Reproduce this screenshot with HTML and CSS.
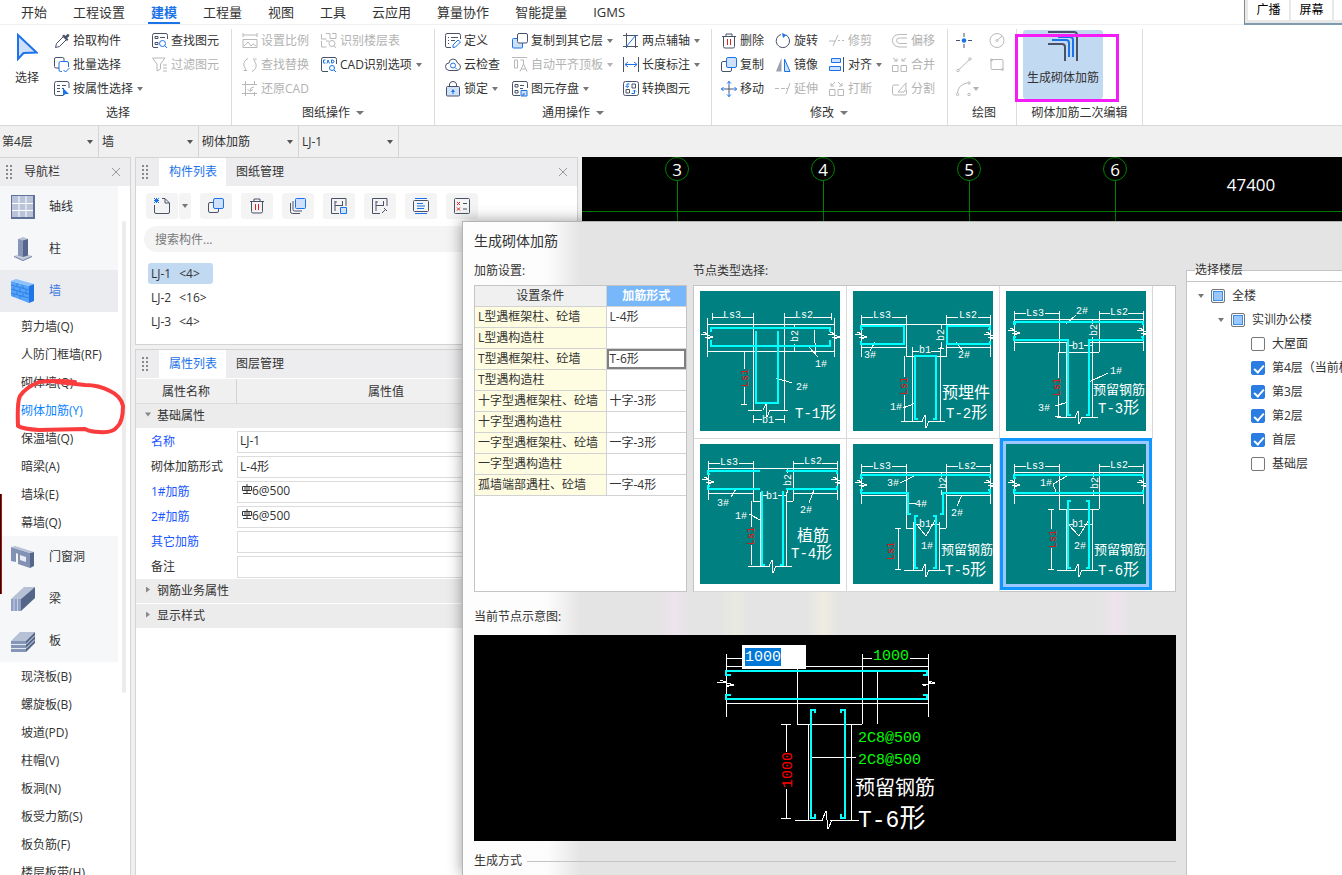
FILE: index.html
```html
<!DOCTYPE html>
<html lang="zh-CN">
<head>
<meta charset="utf-8">
<title>生成砌体加筋</title>
<link rel="stylesheet" href="styles.css">
</head>
<body>
<svg class="defs" aria-hidden="true">
  <symbol id="side-break" viewBox="-7 -6 14 12" overflow="visible"><path d="M-6-1H1L-4-3M0 2H6L0 0M-2 2L3 4"/></symbol>
  <symbol id="foot-break" viewBox="-7 -7 14 14" overflow="visible"><path d="M-3 0L0-6L1 7L4 0"/></symbol>
  <symbol id="i-close" viewBox="0 0 10 10"><path d="M1 1l8 8M9 1l-8 8"/></symbol>
  <symbol id="i-copy" viewBox="0 0 16 16"><rect class="d" x=".5" y="4.500" width="10" height="10" rx="1.500"/><rect class="bf" x="5.500" y=".5" width="10" height="10" rx="1.500"/></symbol>
  <symbol id="i-trash" viewBox="0 0 16 16"><path class="d" d="M1 3.500h14M5 3V1h6v2M2.500 4v9.500q0 1.500 1.500 1.500h8q1.500 0 1.500-1.500V4"/><path class="r" d="M6.500 6v6M9.500 6v6"/></symbol>
</svg>

<nav class="menu">
  <a href="#">开始</a><a href="#">工程设置</a><a href="#" class="on">建模</a><a href="#">工程量</a><a href="#">视图</a><a href="#">工具</a><a href="#">云应用</a><a href="#">算量协作</a><a href="#">智能提量</a><a href="#">IGMS</a>
  <div class="share"><button>广播</button><button>屏幕</button><button></button></div>
</nav>

<div class="ribbon">
  <section class="group g1">
    <div class="tools">
      <button class="big"><svg viewBox="0 0 22 28"><path class="bf w2" d="M2 2V26L7.500 20L20.500 19.500Z"/></svg>选择</button>
      <div class="col">
        <button><svg viewBox="0 0 16 16"><path class="d" d="M9 4L2.500 10.500L1.500 14.500L5.500 13.500L12 7"/><path class="df" d="M8 3l5 5 1.500-1.500-1.500-1.500L15 3.500Q16 1 13.500 1L11.500 3 10 1.500z"/></svg>拾取构件</button>
        <button><svg viewBox="0 0 16 16"><path class="d" d="M5 11H2Q.5 11 .5 9.500V2Q.5.5 2 .5H8.500Q10 .5 10 2V4"/><path class="b" d="M14.500 10V6Q14.500 4.500 13 4.500H6.500Q5 4.500 5 6V13Q5 14.500 6.500 14.500H8M9.500 13l2 2 4-4"/></svg>批量选择</button>
        <button><svg viewBox="0 0 16 16"><path class="d" d="M9 14.500H2.500Q.5 14.500.5 13V2.500Q.5.500 2.500.500H13Q15 .5 15 2.500V7M3 4.500h3M8 4.500h4M3 7.500h3M8 7.500h2M3 10.500h3"/><path class="bb" d="M9 7v8l2.500-2H15z"/></svg>按属性选择<i class="caret"></i></button>
      </div>
      <div class="col">
        <button><svg viewBox="0 0 16 16"><path class="d" d="M6 14.500H2Q.5 14.500.5 13V2.500Q.5.500 2 .5H14Q15.500.5 15.500 2.500V6M3 3.500h3v2H3zM3 9.500h3v2H3zM8 4.500h5"/><circle class="b" cx="10.500" cy="10.500" r="3"/><path class="b" d="M13 13l2 2"/></svg>查找图元</button>
        <button disabled><svg viewBox="0 0 16 16"><path class="d" d="M.5 1H13L8.500 7V12L5 14V7ZM11 8h4M11 11h4M11 14h4"/></svg>过滤图元</button>
      </div>
    </div>
    <h2>选择</h2>
  </section>
  <section class="group g2">
    <div class="tools">
      <div class="col">
        <button disabled><svg viewBox="0 0 16 16"><path class="d" d="M1 0v4M15 0v4M1 2h14M1 6.500h14v8H1zM2 13l4-4 3 4 2-2 3 2"/></svg>设置比例</button>
        <button disabled><svg viewBox="0 0 16 16"><path class="d" d="M6 1.500Q1 4 2 9l2 4M1.500 13.500H5M10 14.500Q15 12 14 7L12 3M14.500 2H11"/></svg>查找替换</button>
        <button disabled><svg viewBox="0 0 16 16"><path class="d" d="M0 3.500h15M3.500 0v15M12.500 0v3M0 12.500h15M12.500 11v4M12 6Q8 6 8 10M5.500 8L8 10.500l3-2"/></svg>还原CAD</button>
      </div>
      <div class="col">
        <button disabled><svg viewBox="0 0 16 16"><path class="d" d="M.5 1v5h5M5 .5h4v5M11 .5h4v5h-6M.5 8v6h5M5 8h3"/><circle class="d" cx="11" cy="10.500" r="3"/><path class="d" d="M13 13l2 2"/></svg>识别楼层表</button>
        <button><svg viewBox="0 0 16 16"><path class="d" d="M7 14.500H2Q.5 14.500.5 13V2.500Q.5.500 2 .5H14Q15.500.5 15.500 2.500V7"/><path class="b" d="M4.500 3H2.500v3h2M6 6.500l1-3.500 1.500 3.500M10.500 3v3h1.500l1-1.500-1-1.500z"/><circle class="b" cx="11" cy="11" r="2.500"/><path class="b" d="M13 13l2 2"/></svg>CAD识别选项<i class="caret"></i></button>
      </div>
    </div>
    <h2>图纸操作<i class="caret lg"></i></h2>
  </section>
  <section class="group g3">
    <div class="tools">
      <div class="col">
        <button><svg viewBox="0 0 16 16"><path class="d" d="M6 14.500H2Q.5 14.500.5 13V2.500Q.5.500 2 .5H14Q15.500.5 15.500 2.500V6M3 4.500h1M6 4.500h7M3 7.500h1M6 7.500h4M3 10.500h1"/><path class="b" d="M8 14.500V12L13 7l2.500 2-5 5z"/></svg>定义</button>
        <button><svg viewBox="0 0 16 16"><path class="d" d="M4 13.500Q.5 13 .5 9.500T4 6Q4.500 2 8 2t4.500 4Q15.500 7 15.500 10T12 13.500Z"/><circle class="b" cx="8" cy="8.500" r="2.500"/><path class="b" d="M10 10.500l2 2"/></svg>云检查</button>
        <button><svg viewBox="0 0 16 16"><path class="d" d="M4.500 5V3Q5 .5 8 .5T11.500 3V5"/><rect class="lock" x="1.500" y="5.500" width="13" height="9.500" rx="1"/><path class="bb" d="M8 8l2 3H8.500v2h-1v-2H6z"/></svg>锁定<i class="caret"></i></button>
      </div>
      <div class="col">
        <button><svg viewBox="0 0 16 16"><rect class="bf" x=".5" y="5.500" width="10" height="9.500" rx="1"/><rect class="wd" x="5.500" y=".5" width="10" height="9.500" rx="1.500"/></svg>复制到其它层<i class="caret"></i></button>
        <button disabled><svg viewBox="0 0 16 16"><path class="d" d="M0 .500h15M2.500 3h3v8h-3zM8.500 3h3v5M8 14.500L11.500 7 15 14.500M9.500 12h4"/></svg>自动平齐顶板<i class="caret"></i></button>
        <button><svg viewBox="0 0 16 16"><path class="d" d="M8 14.500H2Q.5 14.500.5 13V2.500Q.5.500 2 .5H14Q15.500.5 15.500 2.500V7M3 3.500h3v2.500H3zM8 4.500h4M3 9.500h3V12H3zM8 7.500h3"/><path class="bf" d="M9 9.500h6v5.500H9zM11 15v-2h2"/></svg>图元存盘<i class="caret"></i></button>
      </div>
      <div class="col">
        <button><svg viewBox="0 0 16 16"><path class="d" d="M0 2.500h15M3.500 0v15M12.500 2v13M0 13.500h15"/><path class="b" d="M3 14L13 2"/></svg>两点辅轴<i class="caret"></i></button>
        <button><svg viewBox="0 0 16 16"><path class="d" d="M.5 0v15M15.500 0v15"/><path class="b" d="M2 7.500h12M5 5L2 7.500 5 10M11 5l3 2.500L11 10"/></svg>长度标注<i class="caret"></i></button>
        <button><svg viewBox="0 0 16 16"><path class="d" d="M2.500.5h11q2 0 2 2v10q0 2-2 2h-11q-2 0-2-2v-10q0-2 2-2zM9 3h3.500v4H9zM3 8.500h3.500v3.500H3z"/><path class="b" d="M6.500 3H4v3M2.500 5L4 6.500 6 5M8.500 12.500h3V9.500M10 10.500L11.500 9l1.500 1.500"/></svg>转换图元</button>
      </div>
    </div>
    <h2>通用操作<i class="caret lg"></i></h2>
  </section>
  <section class="group g4">
    <div class="tools">
      <div class="col">
        <button><svg><use href="#i-trash"/></svg>删除</button>
        <button><svg><use href="#i-copy"/></svg>复制</button>
        <button><svg viewBox="0 0 16 16"><path class="d" d="M8 4v8M4 8h8"/><path class="b" d="M8 0v4M6 2.500L8 .5l2 2M8 12v4M6 13.500l2 2 2-2M0 8h4M2.500 6L.5 8l2 2M12 8h4M13.500 6l2 2-2 2"/></svg>移动</button>
      </div>
      <div class="col">
        <button><svg viewBox="0 0 16 16"><path class="d" d="M6 1.500A6.700 6.700 0 1 0 11 2"/><path class="bb" d="M7 0l4.500 2L8 5z"/></svg>旋转</button>
        <button><svg viewBox="0 0 16 16"><path class="df lt" d="M6.500 1v13.500H1z"/><path class="bf" d="M9.500 2v12.500H15z"/></svg>镜像</button>
        <button disabled><svg viewBox="0 0 16 16"><path class="d" d="M0 7.500h4M6 7.500h4M11 13L15 2M11 7.500h2"/></svg>延伸</button>
      </div>
      <div class="col">
        <button disabled><svg viewBox="0 0 16 16"><path class="d" d="M0 8h6M4 13L9 2M9 7.500h2M13 7.500h2"/></svg>修剪</button>
        <button><svg viewBox="0 0 16 16"><path class="bf" d="M2.500 1.500h9v4h-9zM.5 9.500h11v4H.5z"/><path class="d" d="M14.500 0v15"/></svg>对齐<i class="caret"></i></button>
        <button disabled><svg viewBox="0 0 16 16"><path class="d" d="M0.500 8.500h5.500v6H.5zM9 8.500h5.500v6H9zM6 1L2 5M2 2v3h3M9 1l4 4M13 2v3h-3"/></svg>打断</button>
      </div>
      <div class="col">
        <button disabled><svg viewBox="0 0 16 16"><path class="d" d="M15 1.500H7Q.5 2 .5 7.500T7 14h8M15 5H7.500Q4.500 5 4.500 7.500T7.500 10.500H15"/></svg>偏移</button>
        <button disabled><svg viewBox="0 0 16 16"><path class="d" d="M.5 8.500h5.500v6H.5zM9 8.500h5.500v6H9zM1 1l4 3M5 1.500V4H2M14 1l-4 3M10 1.500V4h3"/></svg>合并</button>
        <button disabled><svg viewBox="0 0 16 16"><path class="d" d="M7 4H2Q.5 4 .5 5.500V12.500Q.5 14 2 14H13Q14.500 14 14.500 12.500V9M6 11L14 2V8L12 11z"/></svg>分割</button>
      </div>
    </div>
    <h2>修改<i class="caret lg"></i></h2>
  </section>
  <section class="group g5">
    <div class="tools">
      <div class="col">
        <button aria-label="点"><svg viewBox="0 0 16 16"><path class="d" d="M8 0v4M8 11v4M0 7.500h4M12 7.500h4"/><circle class="bb" cx="8" cy="7.500" r="2.300"/></svg></button>
        <button disabled aria-label="直线"><svg viewBox="0 0 16 16"><path class="d" d="M3 12.500L13 3"/><circle class="d" cx="2" cy="13.500" r="1.200"/><circle class="d" cx="14" cy="2" r="1.200"/></svg></button>
        <button disabled aria-label="弧"><svg viewBox="0 0 16 16"><path class="d" d="M1.500 12Q2 4 11 2"/><circle class="d" cx="1.500" cy="13.500" r="1.200"/><circle class="d" cx="13" cy="2" r="1.200"/><circle class="d" cx="13" cy="13.500" r="1.200"/></svg><i class="caret"></i></button>
      </div>
      <div class="col">
        <button disabled aria-label="圆"><svg viewBox="0 0 16 16"><circle class="d" cx="8" cy="7.500" r="7"/><circle class="d" cx="8" cy="7.500" r="1"/><path class="d" d="M9 6.500l4-3.500"/></svg></button>
        <button disabled aria-label="矩形"><svg viewBox="0 0 16 16"><rect class="d" x="2" y="2.500" width="12" height="10" rx="1"/><circle class="d" cx="2.500" cy="3" r="1"/><circle class="d" cx="13.500" cy="12.500" r="1"/></svg></button>
      </div>
    </div>
    <h2>绘图</h2>
  </section>
  <section class="group g6">
    <div class="tools">
      <button class="gen"><svg viewBox="0 0 30 30"><path class="d w2" d="M0 1H26Q29 1 29 4V30M0 13H14Q17 13 17 16V30"/><path class="b w2" d="M4 9H18Q21 9 21 12V26M10 6H22Q25 6 25 9V26"/></svg>生成砌体加筋</button>
      <div class="frame"></div>
    </div>
    <h2>砌体加筋二次编辑</h2>
  </section>
</div>

<div class="context">
  <label class="pick"><select aria-label="楼层"><option>第4层</option></select></label>
  <label class="pick"><select aria-label="构件类别"><option>墙</option></select></label>
  <label class="pick"><select aria-label="构件类型"><option>砌体加筋</option></select></label>
  <label class="pick"><select aria-label="构件"><option>LJ-1</option></select></label>
</div>

<main class="work">
  <aside class="nav">
    <header class="bar"><i class="grip"></i><span>导航栏</span><button class="x" aria-label="关闭"><svg><use href="#i-close"/></svg></button></header>
    <div class="navbody">
      <ul class="tree">
        <li class="cat"><svg viewBox="0 0 24 24"><path fill="#5f7199" d="M0 0h24v24H0z"/><path fill="#b9c3da" d="M1 1h21v21H1z"/><path stroke="#fff" d="M8 1v21M15 1v21M1 8.500h21M1 15.500h21"/></svg>轴线</li>
        <li class="cat"><svg viewBox="0 0 24 24"><path fill="#c3cbdb" d="M3 19l9-3 9 3-9 4z"/><path fill="#64769c" d="M3 19l9 4v1l-9-4zM21 19l-9 4v1l9-4z"/><path fill="#8696b8" d="M7 2h5v18l-5-1.500z"/><path fill="#566789" d="M12 2h5v16.500L12 20z"/><path fill="#b7c1d6" d="M7 2l5-2 5 2-5 1.500z"/></svg>柱</li>
        <li class="cat cur"><svg viewBox="0 0 24 24"><path fill="#57a4f7" d="M0 2l18 5v17L0 17z"/><path fill="#8cc3fb" d="M0 2l5-2 18 5-5 2z"/><path fill="#1f74e8" d="M18 7l5-2v17l-5 2z"/><path fill="none" stroke="#2f80e8" d="M0 6l18 5M0 10l18 5M0 14l18 5M6 4v4M12 6v4M3 8v4M9 9v5M15 11v5M6 12v4M12 14v4M3 15v3M9 17v3"/></svg>墙</li>
        <li>剪力墙(Q)</li><li>人防门框墙(RF)</li><li>砌体墙(Q)</li><li class="act">砌体加筋(Y)</li><li>保温墙(Q)</li><li>暗梁(A)</li><li>墙垛(E)</li><li>幕墙(Q)</li>
        <li class="cat"><svg viewBox="0 0 24 24"><path fill="#8292b5" d="M0 2l19 6v15l-12-4V9L5 8v9l-5-1z"/><path fill="#b7c1d6" d="M0 2l4-1 19 6-4 1z"/><path fill="#566789" d="M19 8l4-1v14l-4 2z"/><path fill="#e8ecf4" d="M9 10l6 2v5l-6-2z"/></svg>门窗洞</li>
        <li class="cat"><svg viewBox="0 0 24 24"><path fill="#8fa0c4" d="M0 12h10v12H0z"/><path fill="#b7c1d6" d="M0 12L13 0h11L10 12z"/><path fill="#546588" d="M10 12L24 0v11L10 24z"/><path stroke="#c8d0e2" d="M3 12v12M6.500 12v12"/></svg>梁</li>
        <li class="cat"><svg viewBox="0 0 24 24"><path fill="#b7c1d6" d="M0 12L9 3h15l-9 9z"/><path fill="#8595b8" d="M0 12h15v11H0z"/><path fill="#546588" d="M15 12l9-9v11l-9 9z"/><path stroke="#e3e8f1" fill="none" d="M0 15.500h15l9-9M0 19.500h15l9-9"/></svg>板</li>
        <li>现浇板(B)</li><li>螺旋板(B)</li><li>坡道(PD)</li><li>柱帽(V)</li><li>板洞(N)</li><li>板受力筋(S)</li><li>板负筋(F)</li><li>楼层板带(H)</li>
      </ul>
      <div class="scroll"></div>
    </div>
    <div class="sliver"></div>
    <svg class="scribble" viewBox="0 0 112 60"><path d="M60 4Q40 2 24 4Q10 10 5 18Q2 24 3 48Q8 51 24 52L70 51Q76 54 84 54Q98 55 102 49Q108 44 108 28Q106 18 95 13Q84 7 70 7L42 4"/></svg>
  </aside>

  <div class="middle">
    <section class="panel list">
      <header class="bar"><i class="grip"></i><button class="tab on">构件列表</button><button class="tab">图纸管理</button><button class="x" aria-label="关闭"><svg><use href="#i-close"/></svg></button></header>
      <div class="iconbar">
        <div class="split"><button aria-label="新建"><svg viewBox="0 0 16 16"><path class="d" d="M.5 7v7q0 1.500 1.500 1.500h12q1.500 0 1.500-1.500V5L11 .5H8M11 1v4h4"/><path class="b" d="M0 0l5 5M5 0L0 5M2.500 0v5M0 2.500h5"/></svg></button><button aria-label="更多"><i class="caret"></i></button></div>
        <button aria-label="复制"><svg><use href="#i-copy"/></svg></button>
        <button aria-label="删除"><svg><use href="#i-trash"/></svg></button>
        <button aria-label="层间复制"><svg viewBox="0 0 16 16"><path class="d" d="M.5 5v8.500q0 2 2 2H10M3 3v8.500q0 1.500 1.500 1.500H12"/><rect class="bf" x="5.500" y=".5" width="10" height="10" rx="1"/></svg></button>
        <button aria-label="存档"><svg viewBox="0 0 16 16"><path class="d" d="M8 15.500H.5V.5h14.500V8M4 3v10M4 7.500h7M11.500 3v5M4 4h2"/><path class="bf" d="M9.500 9.500h6v6h-6z"/></svg></button>
        <button aria-label="提取"><svg viewBox="0 0 16 16"><path class="d" d="M8 15.500H.5V.5h14.500V8M4 3v10M4 7.500h7M11.500 3v5M4 4h2M10 15l4-4M12 10l3 3"/></svg></button>
        <button aria-label="排序"><svg viewBox="0 0 16 16"><path class="b" d="M2 .5h12M2 15.500h12M4 5.500h6M4 8h8M4 10.500h7"/><rect class="d" x=".5" y="2.500" width="15" height="11" rx="1"/></svg></button>
        <button aria-label="清除未使用"><svg viewBox="0 0 16 16"><rect class="d" x=".5" y=".5" width="15" height="15" rx="1"/><path class="d" d="M9 5.500h4M9 11h4"/><path class="r" d="M3 4l3 3M6 4L3 7M3 9.500l3 3M6 9.500l-3 3"/></svg></button>
      </div>
      <input class="search" type="text" placeholder="搜索构件..." aria-label="搜索构件">
      <ul class="items"><li class="on"><span>LJ-1</span><span>&lt;4&gt;</span></li><li><span>LJ-2</span><span>&lt;16&gt;</span></li><li><span>LJ-3</span><span>&lt;4&gt;</span></li></ul>
    </section>
    <section class="panel props">
      <header class="bar"><i class="grip"></i><button class="tab on">属性列表</button><button class="tab">图层管理</button></header>
      <div class="prow head"><span>属性名称</span><span>属性值</span></div>
      <div class="sect open"><i></i>基础属性</div>
      <label class="prow key"><span>名称</span><input value="LJ-1"></label>
      <label class="prow"><span>砌体加筋形式</span><input value="L-4形"></label>
      <label class="prow key bar-size"><span>1#加筋</span><input value="6@500"><svg viewBox="0 0 10 10"><path d="M5 0v10M1 9.500h8M.5 2.500h9v4h-9zM3 2v5M7 2v5"/></svg></label>
      <label class="prow key bar-size"><span>2#加筋</span><input value="6@500"><svg viewBox="0 0 10 10"><path d="M5 0v10M1 9.500h8M.5 2.500h9v4h-9zM3 2v5M7 2v5"/></svg></label>
      <label class="prow key"><span>其它加筋</span><input></label>
      <label class="prow"><span>备注</span><input></label>
      <div class="sect"><i></i>钢筋业务属性</div>
      <div class="sect"><i></i>显示样式</div>
    </section>
  </div>

  <div class="canvas">
    <svg class="axes" aria-label="轴网">
      <path d="M0 54H760M95 24V700M241 24V700M387 24V700M533 24V700"/>
      <circle cx="95" cy="12" r="11.500"/><circle cx="241" cy="12" r="11.500"/><circle cx="387" cy="12" r="11.500"/><circle cx="533" cy="12" r="11.500"/>
      <text x="95" y="19">3</text><text x="241" y="19">4</text><text x="387" y="19">5</text><text x="533" y="19">6</text><text x="669" y="34">47400</text>
    </svg>
  </div>
</main>

<div class="dialog" role="dialog" aria-label="生成砌体加筋">
  <h1>生成砌体加筋</h1>
  <div class="cols">
    <div class="left">
      <div class="pair">
        <section class="cfg">
          <h3>加筋设置:</h3>
          <div class="box">
            <table>
              <thead><tr><th>设置条件</th><th class="hot">加筋形式</th></tr></thead>
              <tbody>
                <tr><td>L型遇框架柱、砼墙</td><td>L-4形</td></tr>
                <tr><td>L型遇构造柱</td><td></td></tr>
                <tr><td>T型遇框架柱、砼墙</td><td class="edit">T-6形</td></tr>
                <tr><td>T型遇构造柱</td><td></td></tr>
                <tr><td>十字型遇框架柱、砼墙</td><td>十字-3形</td></tr>
                <tr><td>十字型遇构造柱</td><td></td></tr>
                <tr><td>一字型遇框架柱、砼墙</td><td>一字-3形</td></tr>
                <tr><td>一字型遇构造柱</td><td></td></tr>
                <tr><td>孤墙端部遇柱、砼墙</td><td>一字-4形</td></tr>
              </tbody>
            </table>
          </div>
        </section>
        <section class="types">
          <h3>节点类型选择:</h3>
          <div class="box gal">
            <button class="cell"><svg class="cad" viewBox="0 0 140 140">
              <path class="l" d="M12 22v7M53 22v97M12 26h12M41 26h12M84 22v97M131 22v7M84 26h12M113 26h18M7 33h127M7 60h127M7 27v39M134 27v39M94 33v5M94 53v7M44 60v18M44 96v17M41 113h6M48 119h14M70 119h18M53 124v8M84 124v8M53 128h9M75 128h9M114 39l2 25M109 56l9 10M76 87l16 5"/>
              <path class="c" d="M11 41V37H130V41M11 49V55H130V49M56 40V112H78V40"/>
              <use href="#side-break" x="0" y="38" width="14" height="12"/><use href="#side-break" x="127" y="38" width="14" height="12"/><use href="#foot-break" x="59" y="112" width="14" height="14"/>
              <text x="23" y="27">Ls3</text><text x="95" y="27">Ls2</text><text x="115" y="76">1#</text><text x="96" y="99">2#</text><text x="62" y="132">b1</text><text transform="translate(98 51) rotate(-90)">b2</text><text class="red" transform="translate(48 96) rotate(-90)">Ls1</text>
              <text class="t" x="95" y="127">T-1<tspan>形</tspan></text></svg></button>
            <button class="cell"><svg class="cad" viewBox="0 0 140 140">
              <path class="l" d="M8 24v42M53 24v42M8 26h12M39 26h14M93 24v42M137 24v42M93 26h12M125 26h12M8 33h129M8 56h45M93 56h44M53 65h40M88 33v5M88 51v6M85 57h6M59 56v74M87 56v74M59 60h7M78 60h9M51 65v21M51 104v26M48 130h6M51 130h19M76 130h16M22 51l-5 9M103 51l7 9M50 117l13-5"/>
              <path class="c" d="M10 38H8V35H51V53H8V50M135 38H137V35H94V53H137V50M65 128H62V65H83V128H80"/>
              <use href="#side-break" x="1" y="38" width="14" height="12"/><use href="#side-break" x="130" y="38" width="14" height="12"/><use href="#foot-break" x="65" y="123" width="14" height="14"/>
              <text x="20" y="27">Ls3</text><text x="106" y="27">Ls2</text><text x="11" y="67">3#</text><text x="105" y="67">2#</text><text x="66" y="62">b1</text><text x="37" y="119">1#</text><text transform="translate(91 50) rotate(-90)">b2</text><text class="red" transform="translate(54 104) rotate(-90)">Ls1</text>
              <text class="k" x="89" y="107">预埋件</text><text class="t" x="93" y="127">T-2<tspan>形</tspan></text></svg></button>
            <button class="cell"><svg class="cad" viewBox="0 0 140 140">
              <path class="l" d="M8 20v40M53 20v41M8 22h12M39 22h14M93 20v41M137 20v40M93 22h11M122 22h15M8 28h129M8 51h54M83 51h54M53 61h40M86 28v5M86 46v5M60 51v75M86 51v75M60 54h7M78 54h9M52 61v26M52 105v20M49 125h6M51 126h19M76 126h16M70 24l-10 9M49 115l13-4M102 82l-19 9"/>
              <path class="c" d="M10 33H8V31H137V34M10 46H8V49H62V124H65M135 46H137V49H83V124H80"/>
              <use href="#side-break" x="1" y="34" width="14" height="12"/><use href="#side-break" x="130" y="34" width="14" height="12"/><use href="#foot-break" x="65" y="119" width="14" height="14"/>
              <text x="20" y="25">Ls3</text><text x="104" y="24">Ls2</text><text x="70" y="23">2#</text><text x="66" y="58">b1</text><text x="32" y="120">3#</text><text x="104" y="83">1#</text><text transform="translate(91 45) rotate(-90)">b2</text><text class="red" transform="translate(54 105) rotate(-90)">Ls1</text>
              <text class="k s" x="87" y="103">预留钢筋</text><text class="t" x="92" y="122">T-3<tspan>形</tspan></text></svg></button>
            <button class="cell"><svg class="cad" viewBox="0 0 140 140">
              <path class="l" d="M8 17v39M53 17v40M8 19h12M39 19h14M93 17v40M137 17v39M93 19h11M122 19h15M8 24h129M8 49h45M93 49h44M53 57h7M86 57h7M87 24v5M87 44v5M60 48v74M86 48v74M60 51h7M78 51h9M51 57v26M51 101v20M48 122h6M51 122h19M76 122h16M31 53l5-8M109 59l5-13M49 70l13 7"/>
              <path class="c" d="M10 30H8V27H60M86 27H137V30M10 42H8V45H60M86 45H137V42M62 47V121H65M83 47V121H80"/>
              <use href="#side-break" x="1" y="30" width="14" height="12"/><use href="#side-break" x="130" y="30" width="14" height="12"/><use href="#foot-break" x="65" y="115" width="14" height="14"/>
              <text x="20" y="21">Ls3</text><text x="104" y="20">Ls2</text><text x="17" y="62">3#</text><text x="100" y="69">2#</text><text x="35" y="75">1#</text><text x="66" y="55">b1</text><text transform="translate(91 42) rotate(-90)">b2</text><text class="red" transform="translate(54 101) rotate(-90)">Ls1</text>
              <text class="k" x="97" y="97">植筋</text><text class="t" x="91" y="114">T-4<tspan>形</tspan></text></svg></button>
            <button class="cell"><svg class="cad" viewBox="0 0 140 140">
              <path class="l" d="M8 20v40M53 20v64M8 22h12M39 22h14M93 20v64M137 20v40M93 22h12M123 22h14M8 28h129M8 51h45M93 51h44M53 84h7M86 84h7M88 28v5M88 46v5M60 78v48M86 78v48M60 80h7M78 80h9M45 84v41M42 84h6M42 125h6M51 126h19M76 126h16M47 39l14-7M56 59h7M104 62l5-11M64 81l9 11 11-19"/>
              <path class="c" d="M10 34H8V31H137V34M10 46H8V49H55V70H58M135 46H137V49H90V70H87M65 72H62V124H65M80 72H83V124H80"/>
              <use href="#side-break" x="1" y="33" width="14" height="12"/><use href="#side-break" x="130" y="33" width="14" height="12"/><use href="#foot-break" x="65" y="119" width="14" height="14"/>
              <text x="20" y="25">Ls3</text><text x="105" y="25">Ls2</text><text x="34" y="42">3#</text><text x="62" y="63">4#</text><text x="98" y="72">2#</text><text x="66" y="83">b1</text><text x="68" y="105">1#</text><text transform="translate(93 45) rotate(-90)">b2</text><text class="red" transform="translate(41 116) rotate(-90)">Ls1</text>
              <text class="k s" x="88" y="110">预留钢筋</text><text class="t" x="92" y="131">T-5<tspan>形</tspan></text></svg></button>
            <button class="cell sel"><svg class="cad" viewBox="0 0 140 140">
              <path class="l" d="M8 20v40M53 20v45M8 22h12M39 22h14M93 20v45M137 20v40M93 22h11M122 22h15M8 28h129M8 51h129M53 65h40M87 28v5M87 46v5M60 65v61M86 65v61M60 80h7M78 80h9M45 65v20M45 104v21M42 65h6M42 125h6M51 126h19M76 126h16M47 40l14-8M47 40l3 8M63 81l10 11 11-18"/>
              <path class="c" d="M10 34H8V31H137V34M10 46H8V49H137V46M65 57H62V124H65M80 57H83V124H80"/>
              <use href="#side-break" x="1" y="33" width="14" height="12"/><use href="#side-break" x="130" y="33" width="14" height="12"/><use href="#foot-break" x="65" y="119" width="14" height="14"/>
              <text x="20" y="25">Ls3</text><text x="104" y="24">Ls2</text><text x="34" y="42">1#</text><text x="66" y="83">b1</text><text x="68" y="105">2#</text><text transform="translate(92 45) rotate(-90)">b2</text><text class="red" transform="translate(50 104) rotate(-90)">Ls1</text>
              <text class="k s" x="88" y="110">预留钢筋</text><text class="t" x="92" y="131">T-6<tspan>形</tspan></text></svg></button>
          </div>
        </section>
      </div>
      <h3 class="cap">当前节点示意图:</h3>
      <div class="preview">
        <svg class="cad">
          <path class="l" d="M252 19v63M252 23h16M388 19v70M388 23h10M436 23h18M454 19v63M252 31h202M252 68h202M323 31v58M323 89h65M334 89v96M377 89v96M321 185h28M356 185h29M338 122h44M403 37v52M312 89v28M312 154v29M307 89h10M307 183h10"/>
          <path class="c" d="M257 40H252V36H453V40H449M257 60H252V64H453V60H449"/>
          <path class="c" d="M341 78V75H337V183H341V179M367 78V75H371V183H367V179"/>
          <path class="l" d="M243 47h9l-6-2M252 50h8l-7-2M253 52l4-2M448 49h6l-5 2M454 48h7l-6-2M454 46l3 2"/>
          <path class="l" d="M348 185l4-9 2 18 4-9"/>
          <text class="grn" x="399" y="25">1000</text><text class="grn" x="384" y="107">2C8@500</text><text class="grn" x="384" y="129">2C8@500</text>
          <text class="red v" transform="translate(318 153) rotate(-90)">1000</text>
          <text class="k20" x="381" y="160">预留钢筋</text><text class="t23" x="384" y="192">T-6<tspan>形</tspan></text>
        </svg>
        <input class="dim" value="1000" aria-label="长度">
      </div>
      <fieldset class="way"><legend>生成方式</legend></fieldset>
    </div>
    <fieldset class="floors">
      <legend>选择楼层</legend>
      <ul>
        <li class="lv0"><i class="caret"></i><label><input type="checkbox" class="part">全楼</label></li>
        <li class="lv1"><i class="caret"></i><label><input type="checkbox" class="part">实训办公楼</label></li>
        <li class="lv2"><label><input type="checkbox">大屋面</label></li>
        <li class="lv2"><label><input type="checkbox" checked>第4层（当前楼层）</label></li>
        <li class="lv2"><label><input type="checkbox" checked>第3层</label></li>
        <li class="lv2"><label><input type="checkbox" checked>第2层</label></li>
        <li class="lv2"><label><input type="checkbox" checked>首层</label></li>
        <li class="lv2"><label><input type="checkbox">基础层</label></li>
      </ul>
    </fieldset>
  </div>
</div>
</body>
</html>
```
FILE: styles.css
```css
* { box-sizing: border-box; }
html, body { height: 100%; }
body {
  margin: 0;
  display: flex;
  flex-direction: column;
  overflow: hidden;
  position: relative;
  background: #f0f0f0;
  color: #333;
  font: 12px/16px "Open Sans", "Noto Sans CJK SC", sans-serif;
}
button, input, select { font: inherit; color: inherit; }
button { border: 0; padding: 0; background: none; white-space: nowrap; }
ul { list-style: none; margin: 0; padding: 0; }
h1, h2, h3 { margin: 0; font-weight: 400; }
svg { fill: none; }
.defs { position: absolute; width: 0; height: 0; }

/* icon strokes */
.d { stroke: #4a5268; fill: none; }
.b { stroke: #1a73e8; fill: none; }
.r { stroke: #e02020; fill: none; }
.df { fill: #4a5268; }
.lt { fill: #9aa1b0; }
.bf { stroke: #1a73e8; fill: #cfe1fa; }
.bb { fill: #1a73e8; }
.wd { stroke: #4a5268; fill: #fff; }
.lock { stroke: #4a5268; fill: #cfe1fa; }
.w2 { stroke-width: 2; }
button:disabled { color: #b2b2b2; }
button:disabled .d { stroke: #b8b8b8; }
.caret {
  flex: none;
  width: 0;
  height: 0;
  border: 3px solid transparent;
  border-top: 4px solid #777;
  border-bottom: 0;
}
button:disabled .caret { border-top-color: #b2b2b2; }
.caret.lg { border-width: 4px 4px 0; margin: 0 10px 0 6px; }

/* menu */
.menu {
  flex: none;
  display: flex;
  height: 25px;
  padding-left: 18px;
  gap: 20px;
  background: #fff;
  border-bottom: 1px solid #f0f0f0;
  font-size: 13px;
}
.menu a { padding: 0 3px; line-height: 25px; color: #333; text-decoration: none; white-space: nowrap; }
.menu a.on { color: #1a73e8; font-weight: 700; border-bottom: 2px solid #1a73e8; }
.share {
  position: absolute;
  top: 0;
  right: 0;
  display: flex;
  gap: 2px;
  padding: 0 0 3px 3px;
  background: #e8e8e8;
  border-left: 1px solid #888;
  border-bottom: 2px solid #7d9bb3;
}
.share button { width: 41px; height: 20px; background: #fff; color: #000; font-size: 12px; }
.share button:last-child { width: 8px; }

/* ribbon */
.ribbon {
  flex: none;
  display: flex;
  padding-top: 4px;
  background: #fff;
  border-bottom: 1px solid #d8d8d8;
}
.group { display: flex; flex-direction: column; border-right: 1px solid #dcdcdc; }
.group h2 { display: flex; justify-content: center; align-items: center; height: 24px; font-size: 12px; white-space: nowrap; }
.tools { display: flex; height: 72px; position: relative; }
.col { flex: none; display: flex; flex-direction: column; }
.col button { display: flex; align-items: center; height: 24px; }
.col svg { flex: none; width: 16px; height: 16px; margin-right: 3px; }
.col .caret { margin-left: 4px; }
.g1 { width: 232px; }
.g1 h2 { padding-left: 5px; }
.g1 .col:nth-child(2) { width: 98px; }
.big { width: 54px; display: flex; flex-direction: column; align-items: center; padding-top: 4px; }
.big svg { width: 22px; height: 28px; margin-bottom: 9px; }
.g2 { width: 203px; padding-left: 10px; }
.g2 .col:first-child { width: 79px; }
.g3 { width: 277px; padding-left: 10px; }
.g3 .col:nth-child(1) { width: 67px; }
.g3 .col:nth-child(2) { width: 111px; }
.g4 { width: 236px; padding-left: 9px; }
.g4 .col:nth-child(1), .g4 .col:nth-child(2) { width: 54px; }
.g4 .col:nth-child(3) { width: 63px; }
.g5 { width: 69px; padding: 0 4px 0 8px; }
.g5 .col:first-child { width: 33px; }
.g5 .caret { margin-left: -2px; }
.g6 { width: 126px; }
.gen {
  width: 80px;
  height: 69px;
  margin: 1px 0 0 6px;
  display: flex;
  flex-direction: column;
  align-items: center;
  border-radius: 3px;
  background: #c2d9f2;
}
.gen svg { width: 30px; height: 30px; margin: 1px 0 9px; }
.frame { position: absolute; left: -2px; top: 5px; width: 104px; height: 68px; border: 3px solid #f51df5; }

/* context selectors */
.context { flex: none; display: flex; height: 31px; }
.pick { position: relative; width: 100px; border-right: 1px solid #d4d4d4; }
.pick:first-child { width: 99px; }
.pick select { appearance: none; width: 100%; height: 100%; border: 0; padding: 0 0 0 3px; background: none; outline: 0; }
.pick:first-child select { padding-left: 2px; }
.pick::after { content: ""; position: absolute; right: 5px; top: 14px; border: 3px solid transparent; border-top: 4px solid #555; border-bottom: 0; }

/* panels */
.work { flex: 1; min-height: 0; display: flex; gap: 4px; }
.bar { flex: none; display: flex; align-items: center; height: 28px; background: #ededf0; }
.grip { width: 8px; height: 16px; margin: 0 11px 0 5px; background: radial-gradient(circle, #888 1px, transparent 1px) 0 0 / 4px 4px; }
.x { margin-left: auto; width: 10px; height: 10px; }
.x svg { display: block; width: 10px; height: 10px; stroke: #999; }
.nav { position: relative; flex: none; width: 131px; display: flex; flex-direction: column; background: #fff; border: 1px solid #d4d4d4; border-left: 0; border-bottom: 0; }
.nav .bar { padding-right: 9px; }
.navbody { flex: 1; min-height: 0; display: flex; overflow: hidden; }
.tree { width: 118px; }
.tree li { height: 28px; padding-left: 21px; line-height: 30px; white-space: nowrap; }
.tree .cat { height: 42px; display: flex; align-items: center; gap: 14px; padding-left: 11px; background: #f5f7f9; }
.cat svg { width: 24px; height: 24px; }
.tree .cur { background: #ebecf0; color: #3a78e0; }
.tree .act { color: #0a84ff; }
.scroll { width: 4px; height: 472px; margin: 35px 0 0 4px; border-radius: 2px; background: #ececec; }
.sliver { position: absolute; left: 0; top: 336px; width: 2px; height: 100px; background: #000; border-right: 1px solid #d00; }
.scribble { position: absolute; left: 15px; top: 220px; width: 112px; height: 60px; stroke: #fa3c3c; stroke-width: 4; stroke-linecap: round; stroke-linejoin: round; }

.middle { flex: none; width: 443px; display: flex; flex-direction: column; gap: 4px; }
.panel { background: #fff; border: 1px solid #d4d4d4; }
.tab { height: 100%; padding: 0 9px 0 10px; }
.tab.on { background: #fff; color: #1a73e8; }
.middle .grip { margin-right: 10px; }
.tab + .tab { padding-left: 10px; }
.list { height: 188px; }
.list .bar { padding-right: 9px; }
.props { flex: 1; border-bottom: 0; }
.iconbar { display: flex; gap: 9px; padding: 7px 10px; }
.iconbar button { width: 32px; height: 26px; display: flex; justify-content: center; align-items: center; background: #f4f4f5; border-radius: 3px; }
.iconbar svg { width: 16px; height: 16px; }
.split { display: flex; gap: 1px; }
.iconbar .split button:last-child { width: 12px; }
.search { display: block; width: 424px; height: 26px; margin-left: 8px; padding: 0 11px; border: 0; border-radius: 13px; background: #f4f4f5; }
.search::placeholder { color: #777; opacity: 1; }
.items { padding: 11px 12px; display: flex; flex-direction: column; align-items: flex-start; gap: 3px; }
.items li { display: flex; gap: 8px; height: 21px; line-height: 21px; padding: 0 13px 0 3px; border-radius: 3px; }
.items .on { background: #c2d9f2; }

.prow { display: grid; grid-template-columns: 86px 1fr; align-items: center; height: 25px; padding-left: 15px; position: relative; }
.prow input { height: 22px; min-width: 0; border: 1px solid #dcdcdc; padding: 0 0 2px 2px; background: #fff; }
.prow.key span { color: #1a56ff; }
.head { grid-template-columns: 101px 298px; align-items: stretch; padding: 0; margin-top: 1px; text-align: center; line-height: 25px; background: #f0f0f0; border-bottom: 1px solid #dcdcdc; }
.head span:first-child { border-right: 1px solid #d4d4d4; }
.bar-size input { padding-left: 14px; }
.bar-size svg { position: absolute; left: 106px; top: 5px; width: 10px; height: 10px; stroke: #333; }
.sect { display: flex; align-items: center; gap: 6px; height: 24px; margin-bottom: 1px; padding-left: 9px; background: #ececec; }
.sect i { width: 6px; height: 6px; margin-bottom: 3px; background: #888; clip-path: polygon(17% 0, 83% 50%, 17% 100%); }
.sect.open i { clip-path: polygon(0 17%, 100% 17%, 50% 83%); }

.canvas { flex: 1; min-width: 0; overflow: hidden; background: #000; }
.axes { width: 100%; height: 100%; stroke: #008000; display: block; }
.axes path { shape-rendering: crispEdges; }
.axes text { fill: #fff; stroke: none; font-size: 17px; text-anchor: middle; font-family: "Open Sans", sans-serif; }

/* dialog */
.dialog {
  position: absolute;
  left: 462px;
  top: 221px;
  right: 0;
  bottom: 0;
  overflow: hidden;
  padding-left: 11px;
  border: solid #b4b4b4;
  border-width: 1px 0 0 1px;
  background:
    linear-gradient(90deg, transparent 196px, #eee4ee 212px, transparent 226px, transparent 258px, #eaeae2 272px, transparent 286px, transparent 344px, #efece2 360px, transparent 376px, transparent 638px, #efe4ee 652px, transparent 668px) 0 330px / 100% 90px no-repeat,
    linear-gradient(90deg, #fdfdfd 0, #fcfcfc 85px, #e4e4e4 118px);
  box-shadow: 0 0 14px rgba(0, 0, 0, .4);
}
.dialog h1 { font-size: 14px; line-height: 20px; padding: 9px 0 10px; }
.dialog h3 { font-size: 12px; line-height: 16px; padding: 2px 0 6px; }
.cols { display: grid; grid-template-columns: 702px 1fr; gap: 10px; }
.pair { display: grid; grid-template-columns: 213px 1fr; gap: 6px; }
.box { height: 307px; border: 1px solid #c4c4c4; background: #fff; }
table { width: 100%; border-collapse: collapse; table-layout: fixed; }
th, td { height: 21px; padding: 0 3px; border: 1px solid #d2d2d2; font-weight: 400; text-align: left; white-space: nowrap; line-height: 16px; }
tr > :first-child { border-left: 0; }
tr > :last-child { border-right: 0; }
th { border-top: 0; height: 20px; background: #f0f0f0; text-align: center; }
th:first-child { width: 131px; }
th.hot { background: #78b8fa; color: #fff; font-weight: 700; }
td:first-child { background: #fffde1; }
td.edit { box-shadow: inset 0 0 0 2px #808080; }
.gal { display: grid; grid-template-columns: repeat(3, 153px); grid-auto-rows: 153px; align-content: start; }
.cell { padding: 5px 6px 7px; border: solid #d8d8d8; border-width: 0 1px 1px 0; }
.cell.sel { width: 152px; height: 152px; margin-top: -1px; padding: 3px; border: 3px solid #0f96ff; background: #9cc8ff; }
.cell svg { display: block; width: 140px; height: 140px; background: #008080; }
.cad { stroke: #fff; shape-rendering: crispEdges; overflow: hidden; }
.cad .c { stroke: #0ff; stroke-width: 2; }
.cad text { fill: #fff; stroke: none; font: 10px "Liberation Mono", "Noto Sans CJK SC", monospace; }
.cad .red { fill: #f00; }
.cad .t { font-size: 14px; }
.cad .t tspan, .cad .k { font-size: 16px; }
.cad .k.s { font-size: 13px; }
.dialog .cap { padding: 17px 0 10px; }
.preview { position: relative; background: #000; }
.preview svg { display: block; width: 100%; height: 206px; }
.cad .grn { font-size: 15px; fill: #0f0; }
.cad .v { font-size: 15px; }
.cad .k20 { font-size: 20px; }
.cad .t23 { font-size: 23px; }
.cad .t23 tspan { font-size: 26px; }
.dim {
  position: absolute;
  left: 268px;
  top: 10px;
  width: 64px;
  height: 24px;
  border: 3px solid #fff;
  padding: 0;
  color: #fff;
  background: linear-gradient(90deg, #0078d7 36px, #fff 36px);
  font: 15px "Liberation Mono", monospace;
}
fieldset { margin: 0; padding: 0; border: 0; min-width: 0; }
legend { padding: 0; }
.way { border-top: 1px solid #c4c4c4; margin-top: 12px; height: 30px; }
.way legend { padding-right: 5px; }
.floors { border: solid #c4c4c4; border-width: 1px 0 0 1px; height: 640px; margin-top: 1px; background: #fff; overflow: hidden; }
.floors legend { margin-left: 8px; }
.floors ul { border-top: 1px solid #c4c4c4; margin-top: 3px; padding-top: 2px; }
.floors li { display: flex; align-items: center; gap: 7px; height: 24px; white-space: nowrap; }
.floors label { display: flex; align-items: center; gap: 7px; }
.lv0 { padding-left: 11px; }
.lv1 { padding-left: 31px; }
.lv2 { padding-left: 64px; }
input[type="checkbox"] { appearance: none; flex: none; width: 14px; height: 14px; margin: 0; border: 1px solid #777; border-radius: 2px; background: #fff; }
input[type="checkbox"]:checked { border-color: #2a7de1; background: #2a7de1; position: relative; }
input[type="checkbox"]:checked::after { content: ""; position: absolute; left: 4px; top: 1px; width: 4px; height: 8px; border: solid #fff; border-width: 0 2px 2px 0; rotate: 42deg; }
input[type="checkbox"].part { background: #9cc8ff; box-shadow: inset 0 0 0 1px #fff, inset 0 0 0 2px #3a8ee8; }
```
